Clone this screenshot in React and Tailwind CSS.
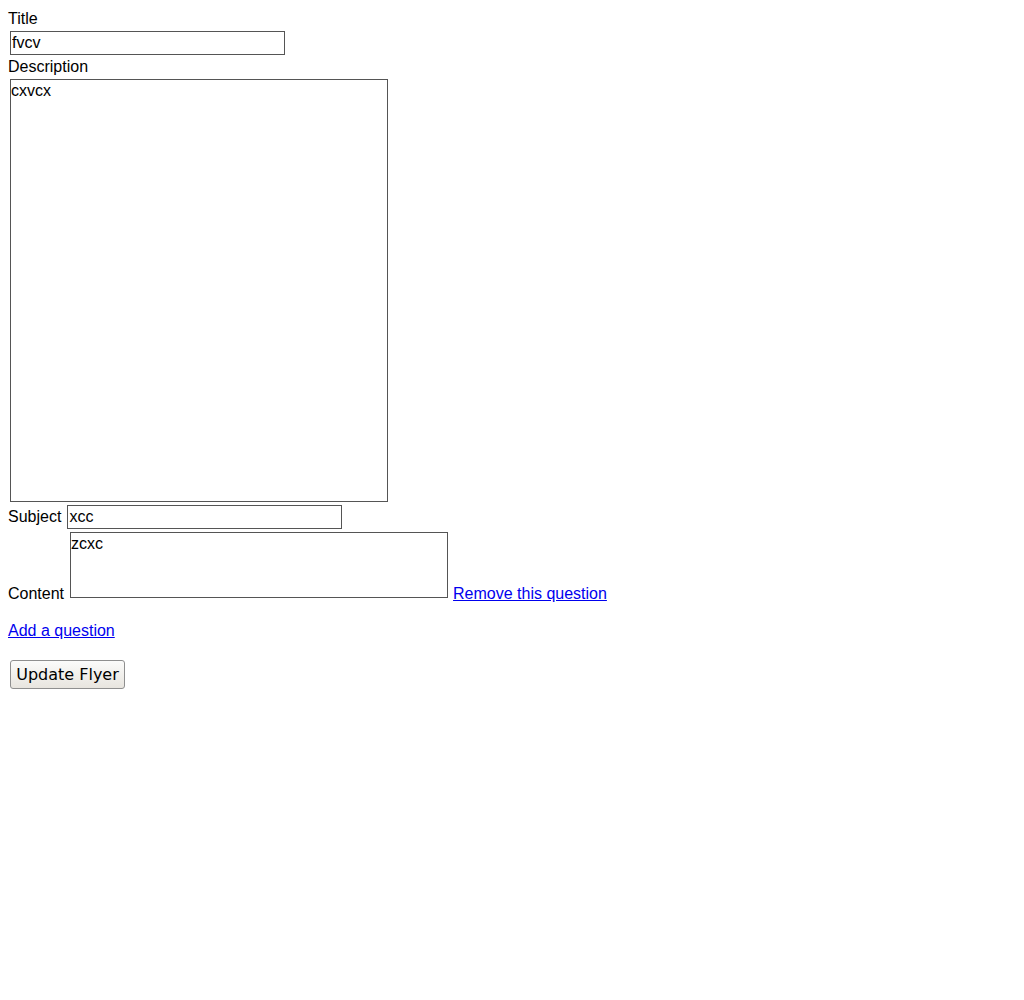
export default function App() {
  return (
    <form className="p-2 font-['Liberation_Sans',Arial,sans-serif] text-base leading-[18px] text-black bg-white min-h-screen">
      <div className="h-[20px] pt-[2px]">Title</div>
      <input
        type="text"
        defaultValue="fvcv"
        className="block mt-[3px] ml-[2px] w-[275px] h-[24px] border border-[#555] px-[1px] outline-none"
      />
      <div className="h-[21px] pt-[3px]">Description</div>
      <textarea
        defaultValue="cxvcx"
        className="block mt-[3px] ml-[2px] w-[378px] h-[423px] border border-[#555] pl-0 pr-[1px] pt-[2px] pb-[1px] resize-none outline-none"
      />

      <div className="flex items-center mt-[3px]">
        <span>Subject</span>
        <input
          type="text"
          defaultValue="xcc"
          className="ml-[6px] w-[275px] h-[24px] border border-[#555] px-[1px] outline-none"
        />
      </div>

      <div className="flex items-end mt-[3px]">
        <span>Content</span>
        <textarea
          defaultValue="zcxc"
          className="ml-[6px] mb-[5px] w-[378px] h-[66px] border border-[#555] pl-0 pr-[1px] pt-[2px] pb-[1px] resize-none outline-none"
        />
        <a href="#" className="ml-[5px] text-[#0000ee] underline">
          Remove this question
        </a>
      </div>

      <div className="mt-[19px]">
        <a href="#" className="text-[#0000ee] underline">
          Add a question
        </a>
      </div>

      <button
        type="button"
        className="block mt-[20px] ml-[2px] w-[115px] h-[29px] rounded-[3px] border border-[#8f8f8f] bg-gradient-to-b from-[#fbfbfa] to-[#e8e5df] font-['DejaVu_Sans',sans-serif] text-base leading-none text-black"
      >
        Update Flyer
      </button>
    </form>
  );
}
